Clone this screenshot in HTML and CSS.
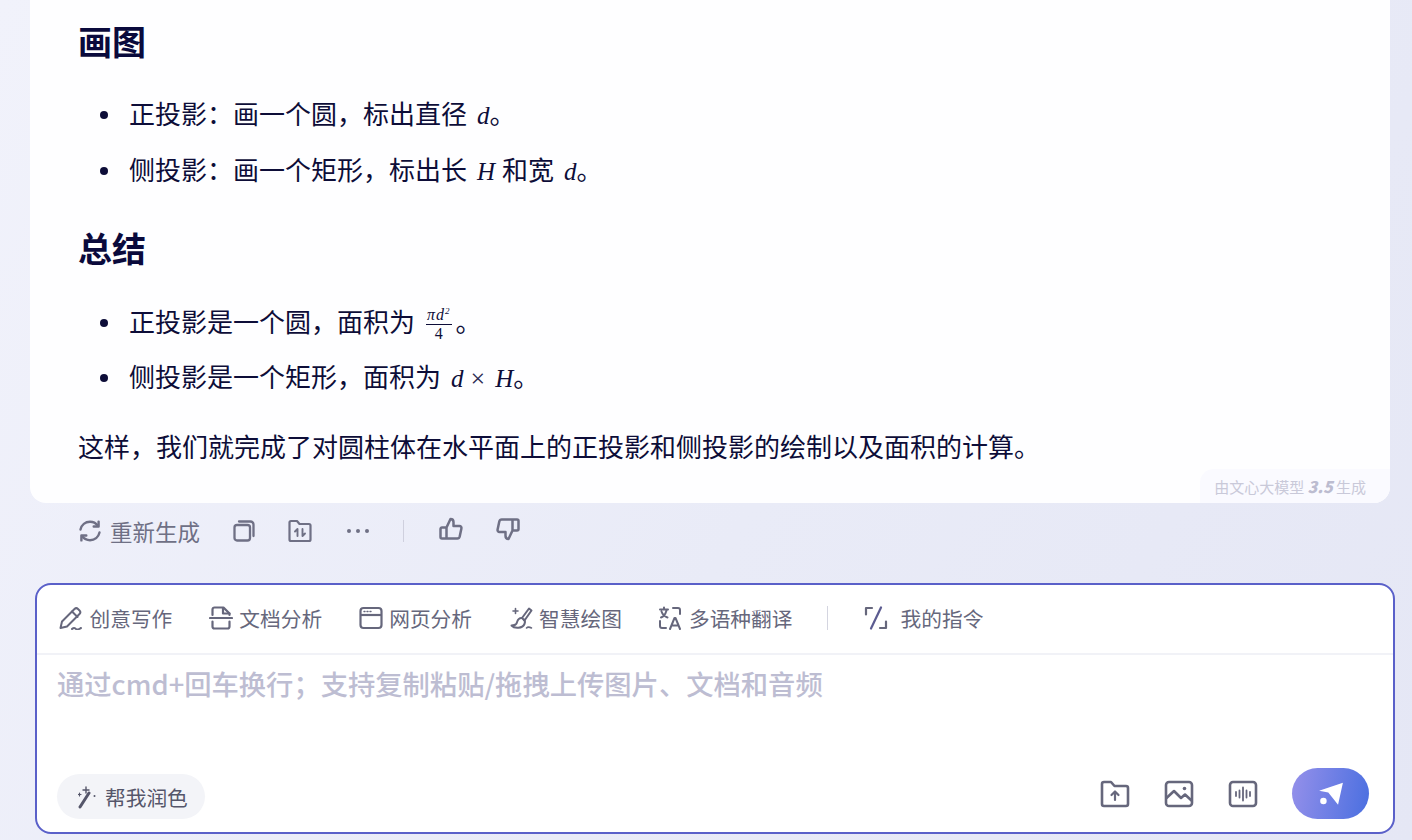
FILE: index.html
```html
<!DOCTYPE html>
<html lang="zh-CN">
<head>
  <meta charset="UTF-8">
  <meta name="viewport" content="width=device-width, initial-scale=1.0">
  <title>文心一言</title>
  <link rel="stylesheet" href="styles.css">
</head>
<body>
  <main class="chat">
    <section class="answer">
      <h2>画图</h2>
      <ul>
        <li>正投影：画一个圆，标出直径<span class="math">d</span>。</li>
        <li class="li-next">侧投影：画一个矩形，标出长<span class="math">H</span><span class="after-math">和宽</span><span class="math">d</span>。</li>
      </ul>
      <h2 class="h-next">总结</h2>
      <ul class="ul-next">
        <li>正投影是一个圆，面积为<span class="frac"><span class="frac-top">πd<sup>2</sup></span><span class="frac-bottom">4</span></span>。</li>
        <li class="li-tight">侧投影是一个矩形，面积为<span class="math">d</span><span class="math-op">×</span><span class="math no-gap">H</span>。</li>
      </ul>
      <p>这样，我们就完成了对圆柱体在水平面上的正投影和侧投影的绘制以及面积的计算。</p>
      <div class="made-by">由文心大模型 <b>3.5</b> 生成</div>
    </section>

    <div class="actions">
      <button class="action regen">
        <svg width="24" height="24" viewBox="0 0 24 24" fill="none" stroke="#6f7085" stroke-width="2.400" stroke-linecap="round" stroke-linejoin="round"><path d="M2.500 10.500C3.500 6 7.300 2.800 12 2.800c3.200 0 6 1.500 7.800 3.900"/><path d="M20.600 2.600v4.900h-4.900"/><path d="M21.500 13.500c-1 4.500-4.800 7.700-9.500 7.700-3.200 0-6-1.500-7.800-3.900"/><path d="M3.400 21.400v-4.900h4.900"/></svg>
        重新生成
      </button>
      <button class="action icon-copy">
        <svg width="22" height="22" viewBox="0 0 22 22" fill="none" stroke="#6f7085" stroke-width="2.300" stroke-linejoin="round" stroke-linecap="round"><rect x="1.500" y="5" width="15.500" height="15.500" rx="2.500"/><path d="M6 1.500h11.500a3 3 0 0 1 3 3V16"/></svg>
      </button>
      <button class="action icon-folder">
        <svg width="24" height="24" viewBox="0 0 24 24" fill="none" stroke="#6f7085" stroke-width="2.200" stroke-linejoin="round" stroke-linecap="round"><path d="M1.500 3.500a1.500 1.500 0 0 1 1.500-1.500h6l2.500 3H21a1.500 1.500 0 0 1 1.500 1.500v14a1.500 1.500 0 0 1-1.500 1.500H3a1.500 1.500 0 0 1-1.500-1.500z"/><path d="M9.500 17v-7l-2.500 2.500M14.500 10v7l2.500-2.500" stroke-width="1.900"/></svg>
      </button>
      <button class="action icon-more">
        <svg width="24" height="6" viewBox="0 0 24 6" fill="#6f7085"><circle cx="3" cy="3" r="2"/><circle cx="12" cy="3" r="2"/><circle cx="21" cy="3" r="2"/></svg>
      </button>
      <span class="action-line"></span>
      <button class="action icon-up">
        <svg width="24" height="24" viewBox="0 0 24 24" fill="none" stroke="#6f7085" stroke-width="2.500" stroke-linejoin="round"><path d="M7.500 10.500 11.500 2c2 0 3 1.500 3 3.200V9h6c1.300 0 2.200 1.200 1.900 2.500l-1.700 8c-.3 1.200-1.200 2-2.400 2H3a1.500 1.500 0 0 1-1.500-1.500v-8A1.500 1.500 0 0 1 3 10.500zV21.500"/></svg>
      </button>
      <button class="action icon-down">
        <svg width="24" height="24" viewBox="0 0 24 24" fill="none" stroke="#6f7085" stroke-width="2.500" stroke-linejoin="round"><path d="M16.500 13.500 12.500 22c-2 0-3-1.500-3-3.200V15h-6c-1.300 0-2.200-1.200-1.900-2.500l1.700-8c.3-1.200 1.200-2 2.400-2H21a1.500 1.500 0 0 1 1.500 1.500v8a1.500 1.500 0 0 1-1.500 1.500zV2.500"/></svg>
      </button>
    </div>

    <section class="composer">
      <div class="tools">
        <a class="tool">
          <svg width="24" height="24" viewBox="0 0 24 24" fill="none" stroke="#66677c" stroke-width="2" stroke-linejoin="round" stroke-linecap="round"><path d="M1.500 22 3 15.500 15.500 3a2.500 2.500 0 0 1 3.500 0l1.500 1.500a2.500 2.500 0 0 1 0 3.500L8 20.500z"/><path d="M13 5.500 18.500 11M13 23c1.500-1.500 3-1.500 4 0s3 0 5-1"/></svg>
          创意写作
        </a>
        <a class="tool">
          <svg width="24" height="24" viewBox="0 0 24 24" fill="none" stroke="#66677c" stroke-width="2.200" stroke-linejoin="round" stroke-linecap="round"><path d="M3.500 9V3.500a2 2 0 0 1 2-2h9l6 6V9"/><path d="M14 2v5.500h6.500"/><path d="M1 12h22"/><path d="M3.500 15.500v5a2 2 0 0 0 2 2h13a2 2 0 0 0 2-2v-5"/></svg>
          文档分析
        </a>
        <a class="tool">
          <svg width="24" height="24" viewBox="0 0 24 24" fill="none" stroke="#66677c" stroke-width="2.200" stroke-linejoin="round"><rect x="1.500" y="2" width="21" height="20" rx="3"/><path d="M1.500 9h21"/><path d="M5 5.500h1M8 5.500h1M11 5.500h1" stroke-linecap="round" stroke-width="1.400"/></svg>
          网页分析
        </a>
        <a class="tool">
          <svg width="24" height="24" viewBox="0 0 24 24" fill="none" stroke="#66677c" stroke-width="2" stroke-linejoin="round" stroke-linecap="round"><path d="M13 12 20 2.500l2.500 2L15.500 14.500z"/><path d="M12.500 12c-4 0-4 3.500-5 5.500-.8 1.500-3 2-5 2 3 3.500 11 3 13-1.500.8-2 .5-3.500-.5-4.500"/><path d="M6.500 2.500v5M4 5h5M17.500 22c1-1 3-1 5 0" stroke-width="1.600"/></svg>
          智慧绘图
        </a>
        <a class="tool">
          <svg width="24" height="24" viewBox="0 0 24 24" fill="none" stroke="#66677c" stroke-width="2" stroke-linejoin="round" stroke-linecap="round"><path d="M2 3.500h8M6 1.500v2M3 11.500c3-1 4.500-3.500 5.500-7M3.500 5.500c1 3 3 5 6 6"/><path d="M15 2h5a2 2 0 0 1 2 2v4M2 15v5a2 2 0 0 0 2 2h4"/><path d="M12 23l4.500-11h1L22 23M13.500 19.500h7"/></svg>
          多语种翻译
        </a>
        <span class="tools-line"></span>
        <a class="tool tool-mine">
          <svg width="24" height="24" viewBox="0 0 24 24" fill="none" stroke="#66677c" stroke-width="2.200" stroke-linecap="round" stroke-linejoin="round"><path d="M2 8.500V2h6"/><path d="M17 1.500 7 22.500" stroke="#5b5b90"/><path d="M22 15.500v6.500h-6"/></svg>
          我的指令
        </a>
      </div>
      <div class="input-hint">通过cmd+回车换行；支持复制粘贴/拖拽上传图片、文档和音频</div>
      <div class="composer-foot">
        <button class="polish">
          <svg width="20" height="24" viewBox="0 0 20 24" fill="none" stroke="#55566a" stroke-linecap="round"><path d="M2 22 11 8" stroke-width="3"/><path d="M8 2v6M5 5h6" stroke-width="1.400"/><path d="M1.500 8v3M0 9.500h3" stroke-width="1.200"/><circle cx="16.500" cy="11" r="1" fill="#55566a" stroke="none"/></svg>
          帮我润色
        </button>
        <div class="foot-right">
          <button class="foot-icon">
            <svg width="30" height="30" viewBox="0 0 30 30" fill="none" stroke="#66677c" stroke-width="2.600" stroke-linejoin="round" stroke-linecap="round"><path d="M2 5a2 2 0 0 1 2-2h7l3.500 4H26a2 2 0 0 1 2 2v16a2 2 0 0 1-2 2H4a2 2 0 0 1-2-2z"/><path d="M15 21v-8M11.500 16l3.500-3.500 3.500 3.500" stroke-width="2.200"/></svg>
          </button>
          <button class="foot-icon">
            <svg width="30" height="30" viewBox="0 0 30 30" fill="none" stroke="#66677c" stroke-width="2.600" stroke-linejoin="round" stroke-linecap="round"><rect x="2" y="3" width="26" height="24" rx="3"/><path d="M2.500 19 10 12l7 7 4-3.500 6.500 6"/><circle cx="20.500" cy="9.500" r="1.800" fill="#66677c" stroke="none"/></svg>
          </button>
          <button class="foot-icon">
            <svg width="30" height="30" viewBox="0 0 30 30" fill="none" stroke="#66677c" stroke-width="2.600" stroke-linejoin="round" stroke-linecap="round"><rect x="2" y="3" width="26" height="24" rx="3"/><path d="M8 13v4M15 8.500v13M22 13v4M11.500 11.500v7M18.500 11.500v7" stroke-width="1.800"/></svg>
          </button>
          <button class="send">
            <svg width="26" height="26" viewBox="0 0 24 24" fill="#fff"><path d="M1 9 23 1.500 18.500 22 13 15 9.500 10.500z"/><circle cx="5" cy="18.500" r="3"/></svg>
          </button>
        </div>
      </div>
    </section>
  </main>
</body>
</html>
```

FILE: styles.css
```css
html, body {
  margin: 0;
  padding: 0;
  height: 840px;
  overflow: hidden;
}

body {
  font-family: "Noto Sans CJK SC", "Noto Sans", sans-serif;
  color: #0d0d38;
  background: linear-gradient(120deg, #f1f2fb 0%, #e9ebf7 55%, #e5e7f5 100%);
}

.chat {
  padding: 0 17px 0 30px;
}

button {
  border: none;
  background: none;
  padding: 0;
  font-family: inherit;
  cursor: pointer;
}

/* answer card */
.answer {
  position: relative;
  height: 503px;
  box-sizing: border-box;
  margin-right: 5px;
  padding: 18px 48px 0;
  background: #fefeff;
  border-radius: 0 0 16px 16px;
}

.answer h2 {
  margin: 0;
  font-size: 34px;
  line-height: 46px;
  font-weight: 700;
  color: #0a0a3c;
}

.answer .h-next {
  margin-top: 36px;
}

.answer ul {
  margin: 29px 0 0;
  padding: 0 0 0 51px;
  list-style: none;
}

.answer .ul-next {
  margin-top: 30px;
}

.answer li {
  position: relative;
  height: 40px;
  font-size: 26px;
  line-height: 40px;
}

.answer li::before {
  content: "";
  position: absolute;
  left: -29px;
  top: 18px;
  width: 8px;
  height: 8px;
  border-radius: 50%;
  background: #0d0d38;
}

.answer .li-next {
  margin-top: 16px;
}

.answer .li-tight {
  margin-top: 15px;
}

.answer p {
  margin: 30px 0 0;
  font-size: 26px;
  line-height: 40px;
}

.math {
  margin-left: 10px;
  font-family: "Liberation Serif", serif;
  font-style: italic;
  font-size: 25px;
  line-height: 1;
}

.math.no-gap {
  margin-left: 0;
}

.after-math {
  margin-left: 7px;
}

.math-op {
  margin: 0 10px 0 7px;
  font-family: "Liberation Serif", serif;
  font-size: 26px;
  line-height: 1;
  color: #2a2a50;
}

.frac {
  display: inline-flex;
  flex-direction: column;
  align-items: center;
  vertical-align: middle;
  margin: -2px 4px 0 11px;
  font-family: "Liberation Serif", serif;
  font-size: 16px;
  line-height: 17px;
}

.frac-top {
  font-style: italic;
  letter-spacing: 1px;
  padding: 0 1px 1px;
  border-bottom: 1px solid #0d0d38;
}

.frac-top sup {
  font-size: 9px;
  line-height: 0;
}

.made-by {
  position: absolute;
  right: 0;
  bottom: 0;
  padding: 0 24px 0 14px;
  height: 34px;
  line-height: 35px;
  font-size: 15px;
  color: #c9c9d9;
  background: #fafaff;
  border-radius: 14px 0 16px 0;
}

.made-by b {
  font-style: italic;
  font-weight: 800;
  font-size: 16px;
  color: #bcbcd0;
}

/* actions under the card */
.actions {
  display: flex;
  align-items: center;
  height: 56px;
  padding-left: 48px;
}

.action {
  display: flex;
  align-items: center;
  font-size: 22.500px;
  color: #6f7085;
}

.regen {
  gap: 8px;
}

.icon-copy {
  margin-left: 33px;
}

.icon-folder {
  margin-left: 33px;
}

.icon-more {
  margin-left: 34px;
}

.action-line {
  width: 1px;
  height: 22px;
  margin: 0 35px 0 33px;
  background: #cfd0de;
}

.icon-up {
  margin-top: -4px;
}

.icon-down {
  margin: -4px 0 0 33px;
}

/* composer */
.composer {
  box-sizing: border-box;
  height: 251px;
  margin: 24px 0 0 5px;
  border: 2px solid #5a60c9;
  border-radius: 16px;
  background: #fff;
  display: flex;
  flex-direction: column;
}

.tools {
  display: flex;
  align-items: center;
  height: 66px;
  flex-shrink: 0;
  padding-bottom: 2px;
  padding-left: 22px;
  border-bottom: 2px solid #f1f2f7;
  gap: 36.600px;
}

.tool {
  display: flex;
  align-items: center;
  gap: 6.500px;
  font-size: 20.700px;
  color: #66677c;
}

.tool-mine {
  gap: 13px;
  margin-left: -1px;
}

.tools-line {
  width: 1px;
  height: 24px;
  margin-left: -2px;
  background: #d4d5e0;
}

.input-hint {
  padding: 8px 0 0 20px;
  font-size: 27.300px;
  line-height: 40px;
  font-weight: 500;
  color: #bdbdd2;
}

.composer-foot {
  display: flex;
  align-items: flex-end;
  justify-content: space-between;
  margin-top: auto;
  padding: 0 24px 13px 20px;
}

.polish {
  display: flex;
  align-items: center;
  gap: 7px;
  height: 45px;
  padding: 0 17px 0 21px;
  border-radius: 23px;
  background: #f3f4f8;
  font-size: 20.700px;
  color: #55566a;
}

.foot-right {
  display: flex;
  align-items: center;
  gap: 34px;
}

.foot-icon {
  display: flex;
}

.send {
  display: flex;
  align-items: center;
  justify-content: center;
  width: 77px;
  height: 51px;
  border-radius: 26px;
  background: linear-gradient(100deg, #9590ea 0%, #4a6fe0 100%);
}
```
